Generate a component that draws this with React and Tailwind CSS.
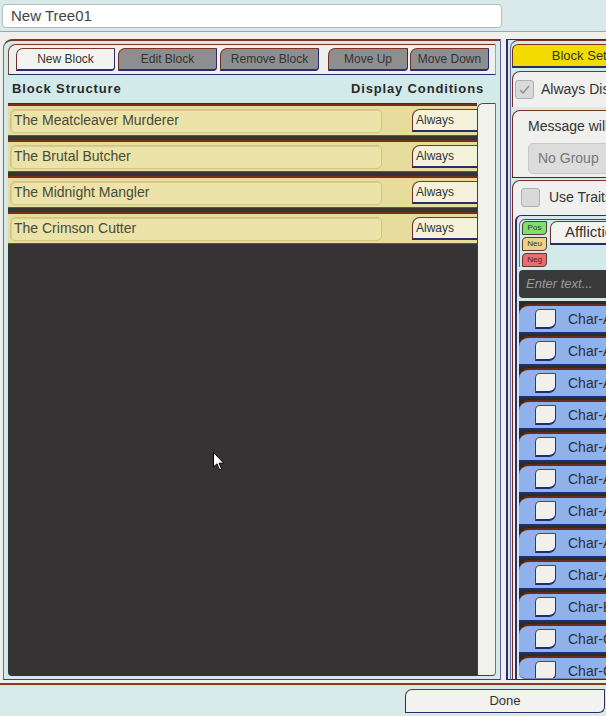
import React from "react";

// Tree editor: block list on the left, block settings (clipped) on the right

const rows = ["The Meatcleaver Murderer", "The Brutal Butcher", "The Midnight Mangler", "The Crimson Cutter"];
const chars = ["Char-A", "Char-A", "Char-A", "Char-A", "Char-A", "Char-A", "Char-A", "Char-A", "Char-A", "Char-B", "Char-C", "Char-C"];

const bevel = "border-t border-l border-b-2 border-r border-t-[#80341f] border-l-[#6b2e2a] border-b-[#2b2a6a] border-r-[#2b2a6a]";

function TabButton({ label, active, className = "" }) {
  return (
    <div
      className={`flex h-[23px] items-center justify-center rounded-tl-[7px] rounded-br-[4px] text-[12px] text-[#333] ${bevel} ${
        active ? "bg-[#f3f3f0]" : "bg-[#8e8e8e]"
      } ${className}`}
    >
      {label}
    </div>
  );
}

function BlockRow({ name }) {
  return (
    <div className="flex h-[32px] shrink-0 items-center border-t-2 border-b border-t-[#7a2e18] border-b-[#4a5a7a] bg-[#e6dc9c] pl-[2px]">
      <div className="flex h-[24px] w-[372px] shrink-0 items-center rounded-[5px] border border-[#cfc48a] bg-[#ebe3a7] pl-[3px] text-[14px] text-[#4a4a3c] shadow-[inset_1px_1px_0_#d8cd90]">
        {name}
      </div>
      <div className="ml-[30px] flex h-[23px] min-w-0 flex-1 items-center rounded-tl-[8px] border-t border-l border-b-2 border-t-[#80341f] border-l-[#6b2e2a] border-b-[#2b2a6a] bg-[#f5f2dc] pl-[3px] text-[12px] text-[#333]">
        Always
      </div>
    </div>
  );
}

function CheckBox({ checked, className = "" }) {
  return (
    <div
      className={`flex h-[19px] w-[19px] shrink-0 items-center justify-center rounded-[3px] border border-[#b0b0b0] bg-[#d9d9d9] ${className}`}
    >
      {checked && (
        <svg width="13" height="13" viewBox="0 0 13 13">
          <path d="M2 7 L5 10 L11 3" fill="none" stroke="#8a8a8a" strokeWidth="1.3" />
        </svg>
      )}
    </div>
  );
}

function CharRow({ label }) {
  return (
    <div className="flex h-[30px] shrink-0 items-center rounded-tl-[10px] border-t-2 border-b-2 border-t-[#6b2a1c] border-b-[#1f2f78] bg-[#8fb2ea] pl-[16px]">
      <div className="h-[20px] w-[21px] shrink-0 rounded-tl-[5px] rounded-br-[7px] border border-b-2 border-t-[#8a3a26] border-l-[#6b2e2a] border-b-[#2b2a6a] border-r-[#2b2a6a] bg-[#f1f0ea]" />
      <span className="ml-[12px] text-[14px] text-[#2d2d3a]">{label}</span>
    </div>
  );
}

function Cursor() {
  return (
    <svg className="absolute left-[213px] top-[452px]" width="12" height="19" viewBox="0 0 12 19">
      <path d="M0.5 0.5 L0.5 15 L4 11.8 L6.6 17.8 L8.6 17 L6.1 11.2 L10.8 11.2 Z" fill="#fff" stroke="#000" strokeWidth="1" />
    </svg>
  );
}

export default function App() {
  return (
    <div className="relative h-[716px] w-[606px] overflow-hidden bg-[#efefec] font-['Liberation_Sans',Arial,sans-serif]">
      {/* title bar */}
      <div className="h-[32px] border-b border-[#9aa6b6] bg-[#d9e8e9] px-[2px] pt-[4px]">
        <div className="flex h-[24px] w-[500px] items-center rounded-[4px] border border-[#b6bcbc] bg-white pl-[8px] text-[15px] text-[#444]">
          New Tree01
        </div>
      </div>

      {/* main area */}
      <div className="flex h-[651px] pl-[3px] pt-[7px]">
        {/* left panel */}
        <div className="flex h-[641px] w-[498px] shrink-0 flex-col rounded-tl-[9px] border-t-2 border-l border-r border-b border-t-[#7f3320] border-l-[#6a6e9a] border-r-[#5c6090] border-b-[#3b3f80] bg-[#d3eaeb] px-[4px] pt-[3px]">
          <div className="flex h-[31px] items-center rounded-tl-[8px] border-t border-l border-b border-r border-t-[#80341f] border-l-[#7a4640] border-b-[#2b2a6a] border-r-[#9aa0b8] bg-[#eef0ee] pl-[7px] pr-[3px]">
            <TabButton label="New Block" active className="w-[99px]" />
            <TabButton label="Edit Block" className="ml-[3px] w-[99px]" />
            <TabButton label="Remove Block" className="ml-[3px] w-[99px]" />
            <TabButton label="Move Up" className="ml-[9px] w-[80px]" />
            <TabButton label="Move Down" className="ml-[2px] w-[79px]" />
          </div>
          <div className="flex h-[28px] items-center justify-between pl-[4px] pr-[12px] text-[13px] font-bold tracking-[0.85px] text-[#2a2a2a]">
            <span>Block Structure</span>
            <span>Display Conditions</span>
          </div>
          <div className="flex min-h-0 flex-1 pb-[3px]">
            <div className="flex w-[472px] flex-col gap-[4px] overflow-hidden rounded-bl-[4px] bg-[#353334] pt-[1px]">
              {rows.map((r) => (
                <BlockRow key={r} name={r} />
              ))}
            </div>
            <div className="w-[19px] rounded-tl-[6px] rounded-br-[4px] border-t border-l border-b border-r border-t-[#7f3320] border-l-[#3a3a70] border-b-[#3a3a70] border-r-[#6a6e9a] bg-[#f2f2ec]" />
          </div>
        </div>

        {/* right panel (clipped by window) */}
        <div className="ml-[5px] flex h-[641px] w-[300px] shrink-0 border-l-2 border-t border-b border-[#2e2c6a] bg-[#d3eaeb] pl-[2px]">
          <div className="flex flex-1 flex-col rounded-tl-[8px] border-l border-t border-t-[#7f3320] border-l-[#6a6e9a] pl-[1px] pt-[3px]">
            <div className={`flex h-[24px] w-[162px] items-center justify-center rounded-tl-[6px] text-[13px] text-[#333] ${bevel} bg-[#f2dc00]`}>
              Block Settings
            </div>
            <div className="mt-[3px] flex h-[36px] items-center rounded-tl-[8px] border-t border-l border-t-[#80341f] border-l-[#6b2e2a] bg-[#f0f0ee] pl-[2px]">
              <CheckBox checked />
              <span className="ml-[7px] text-[14px] text-[#333]">Always Display Message</span>
            </div>
            <div className="mt-[3px] flex h-[68px] flex-col rounded-tl-[8px] border-t border-l border-b border-t-[#80341f] border-l-[#6b2e2a] border-b-[#2b2a6a] bg-[#f0f0ee] pl-[15px] pt-[5px]">
              <span className="text-[14px] text-[#333]">Message will use group</span>
              <div className="mt-[6px] flex h-[31px] w-[180px] items-center rounded-[5px] border border-[#c8c8c8] bg-[#dcdcdc] pl-[9px] text-[14px] text-[#777]">
                No Group
              </div>
            </div>
            <div className="mt-[2px] flex min-h-0 flex-1 flex-col rounded-tl-[8px] border-t border-l border-t-[#80341f] border-l-[#6b2e2a] bg-[#f0f0ee] pl-[2px] pt-[6px]">
              <div className="flex items-center pl-[6px]">
                <CheckBox />
                <span className="ml-[9px] text-[14px] text-[#333]">Use Traits Filter</span>
              </div>
              <div className="mt-[7px] flex min-h-0 flex-1 flex-col rounded-tl-[6px] border-l-2 border-t border-[#2e2c6a] bg-[#d3eaeb] pl-[2px] pt-[3px]">
                <div className="flex rounded-tl-[6px] border-l border-t border-t-[#80341f] border-l-[#6a6e9a] pl-[2px]">
                  <div className="flex flex-col gap-[2px] pt-[1px]">
                    <div className="flex h-[14px] w-[25px] items-center justify-center rounded-tl-[4px] rounded-br-[4px] border border-[#5a3a3a] bg-[#7ee06c] text-[8px] text-[#333]">Pos</div>
                    <div className="flex h-[14px] w-[25px] items-center justify-center rounded-tl-[4px] rounded-br-[4px] border border-[#5a3a3a] bg-[#ecd284] text-[8px] text-[#333]">Neu</div>
                    <div className="flex h-[14px] w-[25px] items-center justify-center rounded-tl-[4px] rounded-br-[4px] border border-[#5a3a3a] bg-[#ec6c6c] text-[8px] text-[#333]">Neg</div>
                  </div>
                  <div className="ml-[3px] mt-[1px] flex h-[24px] w-[200px] items-center rounded-tl-[7px] border-t border-l border-b-2 border-t-[#80341f] border-l-[#6b2e2a] border-b-[#2b2a6a] bg-[#f3f3f0] pl-[14px] text-[15px] text-[#333]">
                    Afflictions
                  </div>
                </div>
                <div className="mt-[3px] flex h-[28px] items-center rounded-[4px] bg-[#3a3a3a] pl-[7px] text-[13px] italic text-[#9a9a9a]">
                  Enter text...
                </div>
                <div className="mt-[3px] flex min-h-0 flex-1 flex-col gap-[2px] overflow-hidden rounded-bl-[6px] border-b border-[#7a8a9a] bg-[#302b29] pt-[3px]">
                  {chars.map((c, i) => (
                    <CharRow key={i} label={c} />
                  ))}
                </div>
              </div>
            </div>
          </div>
        </div>
      </div>

      {/* bottom bar */}
      <div className="flex h-[33px] justify-end border-t-2 border-[#8a3a1c] bg-[#d6eaea] pt-[4px]">
        <div className="mr-[1px] flex h-[24px] w-[200px] items-center justify-center rounded-tl-[7px] rounded-br-[6px] border border-t-[#80341f] border-l-[#2b2a6a] border-b-[#2b2a6a] border-r-[#2b2a6a] bg-[#f2f2ee] text-[13px] text-[#333]">
          Done
        </div>
      </div>

      <Cursor />
    </div>
  );
}
